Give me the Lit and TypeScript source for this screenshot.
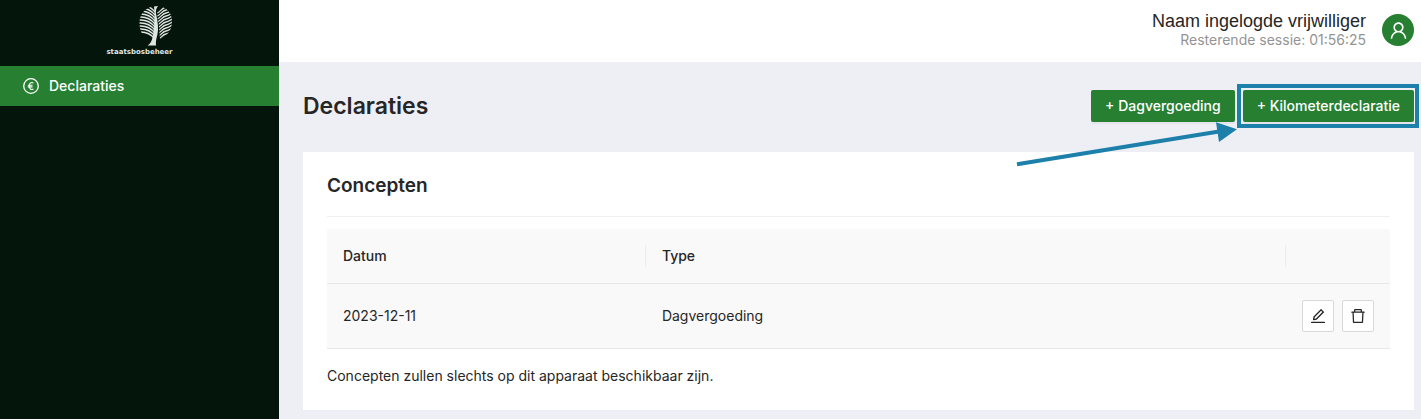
import { LitElement, html, css, svg } from "lit";
import { customElement, property, state } from "lit/decorators.js";

const ICONS: Record<string, string> = {
  edit: "M257.7 752c2 0 4-.2 6-.5L431.9 722c2-.4 3.9-1.3 5.3-2.8l423.9-423.9a9.96 9.96 0 000-14.1L694.9 114.9c-1.9-1.9-4.4-2.9-7.1-2.9s-5.2 1-7.1 2.9L256.8 538.8c-1.5 1.5-2.4 3.3-2.8 5.3l-29.5 168.2a33.5 33.5 0 009.4 29.8c6.6 6.4 14.9 9.9 23.8 9.9zm67.4-174.4L687.8 215l73.3 73.3-362.7 362.6-88.9 15.7 15.6-89zM880 836H144c-17.7 0-32 14.3-32 32v36c0 4.4 3.6 8 8 8h784c4.4 0 8-3.6 8-8v-36c0-17.7-14.3-32-32-32z",
  trash: "M360 184h-8c4.4 0 8-3.6 8-8v8h304v-8c0 4.4 3.6 8 8 8h-8v72h72v-80c0-35.3-28.7-64-64-64H352c-35.3 0-64 28.7-64 64v80h72v-72zm504 72H160c-17.7 0-32 14.3-32 32v32c0 4.4 3.6 8 8 8h60.4l24.7 523c1.6 34.1 29.8 61 63.9 61h454c34.2 0 62.3-26.8 63.9-61l24.7-523H888c4.4 0 8-3.6 8-8v-32c0-17.7-14.3-32-32-32zM731.3 840H292.7l-24.2-512h487l-24.2 512z",
  user: "M858.5 763.6a374 374 0 00-80.6-119.5 375.63 375.63 0 00-119.5-80.6c-.4-.2-.8-.3-1.2-.5C719.5 518 760 444.7 760 362c0-137-111-248-248-248S264 225 264 362c0 82.7 40.5 156 102.8 201.1-.4.2-.8.3-1.2.5-44.8 18.9-85 46-119.5 80.6a375.63 375.63 0 00-80.6 119.5A371.7 371.7 0 00136 901.8a8 8 0 008 8.2h60c4.4 0 7.9-3.5 8-7.8 2-77.2 33-149.5 87.8-204.3 56.7-56.7 132-87.9 212.2-87.9s155.5 31.2 212.2 87.9C779 752.7 810 825 812 902.2c.1 4.4 3.6 7.8 8 7.8h60a8 8 0 008-8.2c-1-47.8-10.9-94.3-29.5-138.2zM512 534c-45.9 0-89.1-17.9-121.6-50.4S340 407.9 340 362c0-45.9 17.9-89.1 50.4-121.6S466.1 190 512 190s89.1 17.9 121.6 50.4S684 316.1 684 362c0 45.9-17.9 89.1-50.4 121.6S557.9 534 512 534z",
};

@customElement("ui-icon")
export class UiIcon extends LitElement {
  @property() name = "edit";

  static styles = css`
    :host {
      display: inline-flex;
    }
    .glyph {
      width: 1em;
      height: 1em;
      fill: currentColor;
    }
  `;

  render() {
    return html`<svg class="glyph" viewBox="0 0 1024 1024" aria-hidden="true">
      <path d=${ICONS[this.name]}></path>
    </svg>`;
  }
}

@customElement("brand-logo")
export class BrandLogo extends LitElement {
  static styles = css`
    :host {
      display: flex;
      flex-direction: column;
      align-items: flex-end;
      color: #dfe5e1;
    }
    .tree {
      width: 34px;
      height: 40px;
    }
    .word {
      font: bold 7px/12px "DejaVu Sans", sans-serif;
    }
  `;

  render() {
    const left = [-3, 0, 3, 6, 9, 12, 15, 18, 21, 24];
    const right = [5, 8, 11, 14, 17, 20, 23, 26, 29, 32, 35, 38];
    return html`
      <svg class="tree" viewBox="0 0 34 40" fill="none" aria-hidden="true">
        <defs>
          <clipPath id="l"><path d="M18 0C8 0 .5 7 .5 16c0 6 1 11 5 15l9 3 2-18z" /></clipPath>
          <clipPath id="r"><path d="M19 0c9 1 14 7 14 15 0 9-4 14-12 18-1-6-.5-12-1.500-16-1.500-5-1.500-10-.5-17z" /></clipPath>
        </defs>
        <g clip-path="url(#l)" stroke="currentColor" stroke-width="1.500">
          ${left.map((y) => svg`<path d=${`M0 ${y + 2}C6 ${y + 1.5} 12 ${y + 4} 16 ${y + 9}`} />`)}
        </g>
        <g clip-path="url(#r)" stroke="currentColor" stroke-width="1.300">
          ${right.map((y) => svg`<path d=${`M18 ${y + 2}C21 ${y + 1.5} 23 ${y - 3.5} 27 ${y - 4}S31 ${y - 6.5} 34 ${y - 7}`} />`)}
        </g>
        <path
          fill="currentColor"
          d="M15 .5L19 0c-2.500 3-2.500 6-1.500 10 1.500 7 2 13 1 18-.8 4-2 7-1.500 11.500H8.500c2-1 3.500-3 4.500-6 1.400-5 2-10 2.200-15 .2-6 .8-11-.2-18z"
        />
      </svg>
      <span class="word">staatsbosbeheer</span>
    `;
  }
}

@customElement("app-root")
export class AppRoot extends LitElement {
  @state() private drafts = [{ date: "2023-12-11", type: "Dagvergoeding" }];

  static styles = css`
    :host {
      display: grid;
      grid-template-columns: 279px minmax(0, 1fr);
      min-height: 100vh;
      background: #eeeff4;
      color: #262626;
      font: 14px/22px Inter, "Liberation Sans", sans-serif;
    }
    * {
      box-sizing: border-box;
    }
    h1,
    h2,
    p {
      margin: 0;
      font-weight: 600;
    }
    .sidebar {
      background: #04150b;
    }
    .brand {
      display: flex;
      justify-content: center;
      height: 66px;
      padding-top: 6px;
    }
    .nav-link {
      display: flex;
      align-items: center;
      gap: 10px;
      height: 40px;
      padding: 0 23px;
      background: #277f31;
      color: #fff;
      font-weight: 500;
      text-decoration: none;
    }
    .euro {
      width: 16px;
      height: 16px;
      fill: none;
      stroke: currentColor;
    }
    .header {
      display: flex;
      align-items: center;
      justify-content: flex-end;
      gap: 16px;
      height: 62px;
      padding: 0 7px 2px;
      background: #fff;
    }
    .account {
      text-align: right;
    }
    .name {
      font: 18px/20px "Liberation Sans", sans-serif;
    }
    .session {
      color: #949494;
      font-weight: 400;
      line-height: 18px;
    }
    .avatar {
      display: flex;
      align-items: center;
      justify-content: center;
      width: 32px;
      height: 32px;
      border: 0;
      border-radius: 50%;
      background: #277f31;
      color: #fff;
      padding: 0;
      font-size: 21px;
    }
    .content {
      padding: 28px 7px 9px 24px;
    }
    .title-row {
      display: flex;
      align-items: center;
      justify-content: space-between;
      margin-bottom: 30px;
    }
    .title {
      font-size: 23px;
      line-height: 32px;
    }
    .actions {
      display: flex;
      gap: 8px;
    }
    .primary {
      height: 32px;
      padding: 0 14px;
      border: 0;
      border-radius: 2px;
      background: #277f31;
      box-shadow: 0 2px 0 rgba(0, 0, 0, 0.04);
      color: #fff;
      font: inherit;
      font-weight: 500;
      white-space: nowrap;
    }
    .marked {
      position: relative;
    }
    .frame {
      position: absolute;
      inset: -6px -5px -6px -6px;
      border: 4px solid #1c80ab;
      pointer-events: none;
    }
    .arrow {
      position: absolute;
      top: 30px;
      right: 100%;
      width: 228px;
      height: 48px;
      pointer-events: none;
    }
    .card {
      padding: 20px 24px 23px;
      background: #fff;
    }
    .card-title {
      padding-bottom: 16px;
      border-bottom: 1px solid #f0f0f0;
      margin-bottom: 12px;
      font-size: 19px;
      line-height: 28px;
    }
    .table {
      width: 100%;
      table-layout: fixed;
      border-collapse: separate;
      border-spacing: 0;
      background: #f9f9f9;
      border-radius: 2px 2px 0 0;
    }
    .col-date {
      width: 30%;
    }
    .col-tools {
      width: 104px;
    }
    th,
    td {
      padding: 16px;
      border-bottom: 1px solid #e8e8e8;
      text-align: left;
      font-weight: 400;
    }
    th {
      padding-right: 0;
      font-weight: 500;
    }
    .label {
      display: block;
      height: 22px;
    }
    .divided {
      border-right: 1px solid #ececec;
    }
    .tools {
      display: flex;
      gap: 8px;
    }
    .tool {
      display: flex;
      align-items: center;
      justify-content: center;
      width: 32px;
      height: 32px;
      padding: 0;
      border: 1px solid #d9d9d9;
      border-radius: 2px;
      background: #fff;
      color: #262626;
      font-size: 18px;
    }
    .note {
      margin-top: 16px;
      font-weight: 400;
    }
  `;

  render() {
    return html`
      <aside class="sidebar">
        <div class="brand"><brand-logo></brand-logo></div>
        <nav>
          <a class="nav-link" href="#declaraties" aria-current="page">
            <svg class="euro" viewBox="0 0 16 16" aria-hidden="true">
              <circle cx="8" cy="8" r="7.300" stroke-width="1.300" />
              <path d="M10.500 5C8 3.700 6.300 5.200 6.300 8s1.700 4.300 4.200 3M4.800 7.200h4.700M4.800 8.900h4.700" stroke-width="1.100" />
            </svg>
            <span>Declaraties</span>
          </a>
        </nav>
      </aside>
      <div>
        <header class="header">
          <div class="account">
            <p class="name">Naam ingelogde vrijwilliger</p>
            <p class="session">Resterende sessie: 01:56:25</p>
          </div>
          <button class="avatar" aria-label="Account"><ui-icon name="user"></ui-icon></button>
        </header>
        <main class="content">
          <div class="title-row">
            <h1 class="title">Declaraties</h1>
            <div class="actions">
              <button class="primary">+ Dagvergoeding</button>
              <div class="marked">
                <button class="primary">+ Kilometerdeclaratie</button>
                <span class="frame"></span>
                <svg class="arrow" viewBox="0 0 228 48" aria-hidden="true">
                  <path d="M2 44.200L204 11.500" stroke="#1c80ab" stroke-width="4" />
                  <path d="M201 2.300L222 9.300L204 22z" fill="#1c80ab" />
                </svg>
              </div>
            </div>
          </div>
          <section class="card">
            <h2 class="card-title">Concepten</h2>
            <table class="table">
              <colgroup>
                <col class="col-date" />
                <col />
                <col class="col-tools" />
              </colgroup>
              <thead>
                <tr>
                  <th scope="col"><span class="label divided">Datum</span></th>
                  <th scope="col"><span class="label divided">Type</span></th>
                  <th scope="col" aria-label="Acties"></th>
                </tr>
              </thead>
              <tbody>
                ${this.drafts.map(
                  (d) => html`<tr>
                    <td>${d.date}</td>
                    <td>${d.type}</td>
                    <td>
                      <div class="tools">
                        <button class="tool" aria-label="Bewerken"><ui-icon name="edit"></ui-icon></button>
                        <button class="tool" aria-label="Verwijderen"><ui-icon name="trash"></ui-icon></button>
                      </div>
                    </td>
                  </tr>`
                )}
              </tbody>
            </table>
            <p class="note">Concepten zullen slechts op dit apparaat beschikbaar zijn.</p>
          </section>
        </main>
      </div>
    `;
  }
}
